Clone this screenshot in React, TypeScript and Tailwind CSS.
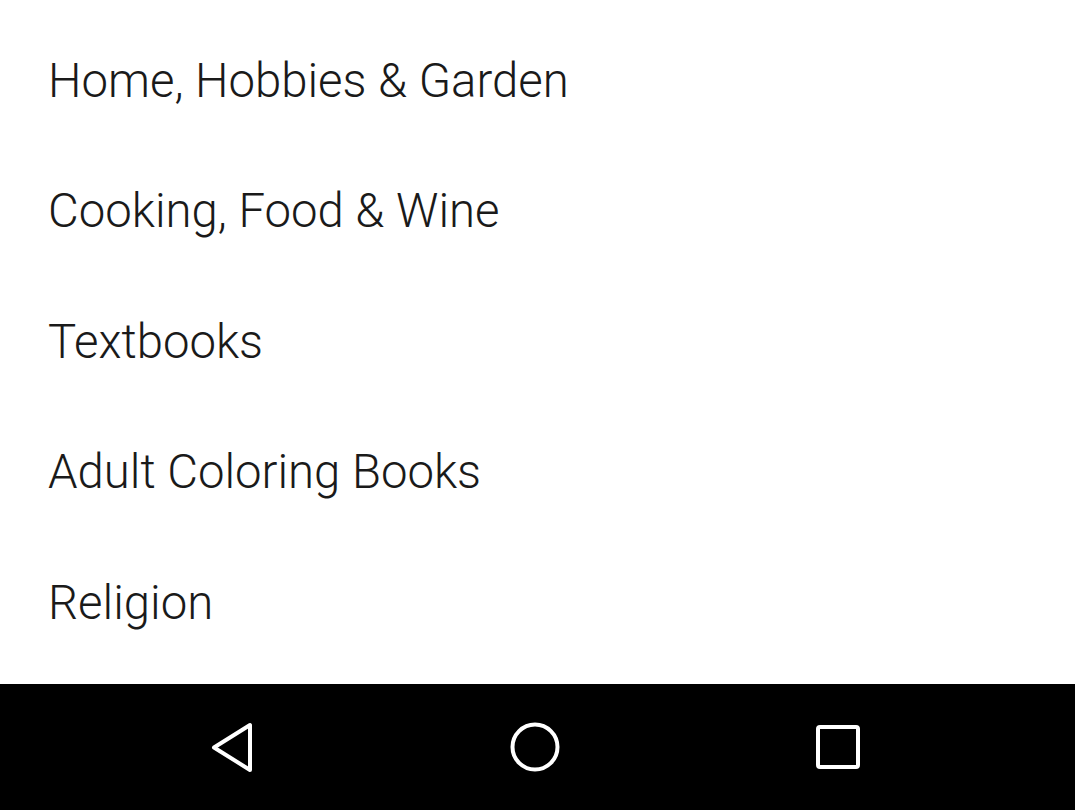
import React from "react";

const items = [
  "Home, Hobbies & Garden",
  "Cooking, Food & Wine",
  "Textbooks",
  "Adult Coloring Books",
  "Religion",
];

export default function App() {
  return (
    <div className="w-[1075px] h-[810px] flex flex-col bg-white overflow-hidden" style={{ fontFamily: "Roboto, 'Liberation Sans', sans-serif" }}>
      <div className="flex-1 flex flex-col pt-[16px]">
        {items.map((t) => (
          <div key={t} className="h-[130.5px] flex items-center pl-[48px] text-[47.3px] font-light text-[#1a1a1a] leading-none">
            {t}
          </div>
        ))}
      </div>
      <div className="h-[126px] bg-black flex items-center justify-center gap-[203px] pr-[5px]">
        <div className="w-[100px] flex justify-center">
          <svg width="47" height="55" viewBox="0 0 47 55">
            <path d="M41 5 L41 50 L5 27.5 Z" fill="none" stroke="white" strokeWidth="4" strokeLinejoin="round" />
          </svg>
        </div>
        <div className="w-[100px] flex justify-center">
          <svg width="54" height="54" viewBox="0 0 54 54">
            <circle cx="27" cy="27" r="22.5" fill="none" stroke="white" strokeWidth="4" />
          </svg>
        </div>
        <div className="w-[100px] flex justify-center">
          <svg width="48" height="48" viewBox="0 0 48 48">
            <rect x="4" y="4" width="40" height="40" rx="2" fill="none" stroke="white" strokeWidth="4" />
          </svg>
        </div>
      </div>
    </div>
  );
}
